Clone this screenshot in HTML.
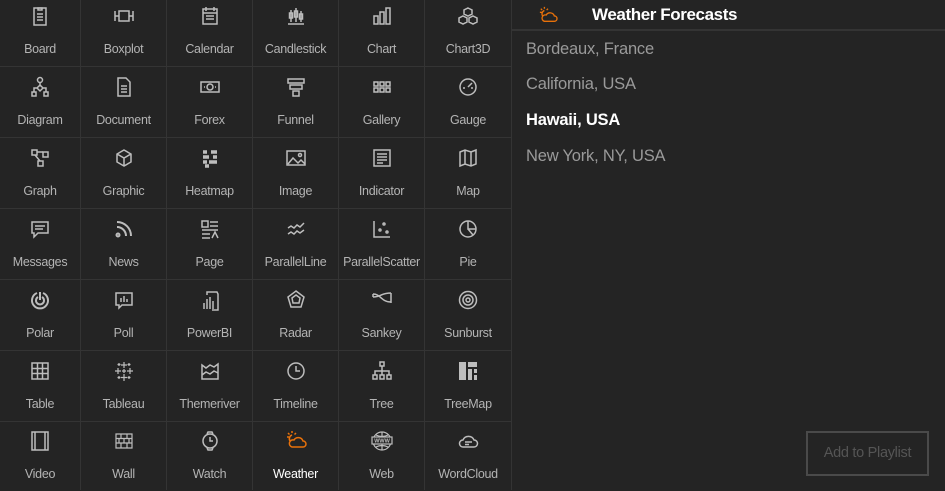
<!DOCTYPE html>
<html><head><meta charset="utf-8"><style>
*{margin:0;padding:0;box-sizing:border-box}
body{width:945px;height:490px;background:#242424;font-family:"Liberation Sans",sans-serif;overflow:hidden;position:relative}
.grid{position:absolute;left:0;top:0;width:512px;height:490px;background:#343434;display:grid;
grid-template-columns:80px 85px 85px 85px 85px 86px;grid-template-rows:66px 70px 70px 70px 70px 70px 69px;gap:1px;border-right:1px solid #343434}
.c{background:#242424;position:relative;color:#b4b4b4;font-size:12.5px;text-align:center}
.c svg{position:absolute;left:50%;bottom:39px;margin-left:-11px;width:22px;height:22px;fill:none;stroke:#bdbdbd;stroke-width:1.5}
.c span{position:absolute;left:0;right:0;bottom:10px;white-space:nowrap;letter-spacing:-0.3px}
.c.on{color:#fff}
.c.on svg{stroke:#e8710a}
.hdr{position:absolute;left:512px;top:0;width:433px;height:31px;border-bottom:2px solid #343434}
.hdr span{position:absolute;left:80px;top:5px;color:#fff;font-size:17px;font-weight:bold;letter-spacing:-0.4px}
.hdr svg{position:absolute;left:26px;top:6px;width:20px;height:18px;fill:none;stroke:#e8710a;stroke-width:1.5}
.it{position:absolute;left:526px;font-size:16.5px;color:#9a9a9a;letter-spacing:-0.2px}
.btn{position:absolute;left:806px;top:431px;width:123px;height:45px;border:2px solid #4a4a4a;color:#555;font-size:14.5px;text-align:center;line-height:41px;letter-spacing:-0.3px}
</style></head><body>
<div class="grid">
<div class="c"><svg viewBox="0 0 22 22"><rect x="5" y="3" width="12" height="17"/><path d="M9 3h4v2H9zM8 9h6M8 12h6M8 15h6"/></svg><span>Board</span></div>
<div class="c"><svg viewBox="0 0 22 22"><path d="M2 6v10M20 6v10M2 11h4M16 11h4"/><rect x="6" y="6" width="10" height="10"/></svg><span>Boxplot</span></div>
<div class="c"><svg viewBox="0 0 22 22"><rect x="4" y="4" width="14" height="15"/><path d="M4 8h14M7 2v4M15 2v4M7 11h8M7 14h8"/></svg><span>Calendar</span></div>
<div class="c"><svg viewBox="0 0 22 22"><path d="M3 19h16M6 5v12M11 3v14M16 6v11"/><rect x="4.5" y="8" width="3" height="5"/><rect x="9.5" y="6" width="3" height="6"/><rect x="14.5" y="9" width="3" height="5"/></svg><span>Candlestick</span></div>
<div class="c"><svg viewBox="0 0 22 22"><rect x="3" y="11" width="4" height="8"/><rect x="9" y="7" width="4" height="12"/><rect x="15" y="3" width="4" height="16"/></svg><span>Chart</span></div>
<div class="c"><svg viewBox="0 0 22 22"><path d="M11 3l4 2v4l-4 2-4-2V5zM6 11l4 2v4l-4 2-4-2v-4zM16 11l4 2v4l-4 2-4-2v-4z"/></svg><span>Chart3D</span></div>

<div class="c"><svg viewBox="0 0 22 22"><circle cx="11" cy="4" r="2.5"/><path d="M11 6.5v3M11 9l3 3-3 3-3-3zM8 12H5v4M14 12h3v4"/><rect x="3" y="16" width="4" height="4"/><rect x="15" y="16" width="4" height="4"/></svg><span>Diagram</span></div>
<div class="c"><svg viewBox="0 0 22 22"><path d="M5 2h8l4 4v14H5zM8 10h6M8 13h6M8 16h6"/></svg><span>Document</span></div>
<div class="c"><svg viewBox="0 0 22 22"><rect x="2" y="6" width="18" height="10"/><circle cx="11" cy="11" r="3"/><path d="M5 11h1M16 11h1"/></svg><span>Forex</span></div>
<div class="c"><svg viewBox="0 0 22 22"><path d="M3 3h16v4H3zM5 9h12v4H5zM8 15h6v5H8z"/></svg><span>Funnel</span></div>
<div class="c"><svg viewBox="0 0 22 22"><path d="M3 6h4v4H3zM9 6h4v4H9zM15 6h4v4h-4zM3 12h4v4H3zM9 12h4v4H9zM15 12h4v4h-4z"/></svg><span>Gallery</span></div>
<div class="c"><svg viewBox="0 0 22 22"><circle cx="11" cy="11" r="8"/><path d="M11 11l4-4M6 12h2M14 12h2"/></svg><span>Gauge</span></div>

<div class="c"><svg viewBox="0 0 22 22"><rect x="3" y="3" width="5" height="5"/><rect x="14" y="5" width="5" height="5"/><rect x="9" y="14" width="5" height="5"/><path d="M8 5h6M6 8l5 6"/></svg><span>Graph</span></div>
<div class="c"><svg viewBox="0 0 22 22"><path d="M11 3l7 4v8l-7 4-7-4V7zM4 7l7 4 7-4M11 11v8"/></svg><span>Graphic</span></div>
<div class="c"><svg viewBox="0 0 22 22" style="stroke-width:3.5"><path d="M4 5h4M12 5h6M4 10h6M14 10h4M4 15h4M10 15h8M6 19h4"/></svg><span>Heatmap</span></div>
<div class="c"><svg viewBox="0 0 22 22"><rect x="2" y="4" width="18" height="14"/><path d="M3 17l5-6 5 5 3-3 4 4"/><circle cx="15" cy="8" r="1.5"/></svg><span>Image</span></div>
<div class="c"><svg viewBox="0 0 22 22"><rect x="3" y="3" width="16" height="16"/><path d="M6 7h10M6 10h10M6 13h10M6 16h6"/></svg><span>Indicator</span></div>
<div class="c"><svg viewBox="0 0 22 22"><path d="M3 5l5-2 6 2 5-2v14l-5 2-6-2-5 2zM8 3v14M14 5v14"/></svg><span>Map</span></div>

<div class="c"><svg viewBox="0 0 22 22"><path d="M3 4h16v11H9l-4 4v-4H3zM6 8h10M6 11h8"/></svg><span>Messages</span></div>
<div class="c"><svg viewBox="0 0 22 22" style="stroke-width:2"><path d="M4 4a14 14 0 0 1 14 14M4 9a9 9 0 0 1 9 9"/><circle cx="5" cy="17" r="1.5"/></svg><span>News</span></div>
<div class="c"><svg viewBox="0 0 22 22"><path d="M3 3h6v6H3zM11 4h8M11 8h8M3 12h16M3 16h8M3 20h8M13 20l3-6 3 6"/></svg><span>Page</span></div>
<div class="c"><svg viewBox="0 0 22 22"><path d="M3 10l3-2 3 2 3-3 3 2 4-4M3 16l3-2 3 2 3-3 3 2 4-3"/></svg><span>ParallelLine</span></div>
<div class="c"><svg viewBox="0 0 22 22"><path d="M3 3v16h16"/><circle cx="13" cy="6" r="1"/><circle cx="9" cy="12" r="1"/><circle cx="16" cy="14" r="1"/></svg><span>ParallelScatter</span></div>
<div class="c"><svg viewBox="0 0 22 22"><circle cx="11" cy="11" r="8"/><path d="M11 3v8h8M11 11l5 6"/></svg><span>Pie</span></div>

<div class="c"><svg viewBox="0 0 22 22" style="stroke-width:2"><path d="M8 4a8 8 0 1 0 6 0M9 8a4 4 0 1 0 4 0M11 3v8"/></svg><span>Polar</span></div>
<div class="c"><svg viewBox="0 0 22 22"><path d="M3 4h16v12H9l-3 3v-3H3zM8 13V9M11 13V7M14 13v-3"/></svg><span>Poll</span></div>
<div class="c"><svg viewBox="0 0 22 22"><path d="M8 6V3h10l1 2v16h-6M5 20v-6M8 20V10M11 20V8M14 20v-8"/></svg><span>PowerBI</span></div>
<div class="c"><svg viewBox="0 0 22 22"><path d="M11 2l8 6-3 10H6L3 8zM11 6l4 3-1 5H8L7 9z"/></svg><span>Radar</span></div>
<div class="c"><svg viewBox="0 0 22 22"><path d="M2 5c8 0 8 8 18 8M2 8c8 0 8-4 18-4M2 5v3M20 4v10"/></svg><span>Sankey</span></div>
<div class="c"><svg viewBox="0 0 22 22"><circle cx="11" cy="11" r="8.5"/><circle cx="11" cy="11" r="5"/><circle cx="11" cy="11" r="2"/></svg><span>Sunburst</span></div>

<div class="c"><svg viewBox="0 0 22 22"><rect x="3" y="3" width="16" height="16"/><path d="M3 8.5h16M3 13.5h16M8.5 3v16M13.5 3v16"/></svg><span>Table</span></div>
<div class="c"><svg viewBox="0 0 22 22" style="stroke-width:1.2"><path d="M11 2v6M8 5h6M11 14v7M8 17.5h6M5 8v6M2 11h6M17 8v6M14 11h6M9 11h4M11 9v4M6 3v3M4.5 4.5h3M16 3v3M14.5 4.5h3M6 16v3M4.5 17.5h3M16 16v3M14.5 17.5h3"/></svg><span>Tableau</span></div>
<div class="c"><svg viewBox="0 0 22 22"><path d="M3 5v14h16V4l-4 3-4-2-4 3zM3 15l4-3 4 2 4-3 4 2"/></svg><span>Themeriver</span></div>
<div class="c"><svg viewBox="0 0 22 22"><circle cx="11" cy="11" r="8"/><path d="M11 6v5h4"/></svg><span>Timeline</span></div>
<div class="c"><svg viewBox="0 0 22 22"><rect x="9" y="2" width="4" height="4"/><rect x="2" y="15" width="4" height="4"/><rect x="9" y="15" width="4" height="4"/><rect x="16" y="15" width="4" height="4"/><path d="M11 6v9M4 15v-4h14v4"/></svg><span>Tree</span></div>
<div class="c"><svg viewBox="0 0 22 22" style="fill:#bdbdbd;stroke:none"><path d="M2 2h7v18H2zM11 2h9v5h-9zM11 9h4v11h-4zM17 9h3v4h-3zM17 15h3v5h-3z"/></svg><span>TreeMap</span></div>

<div class="c"><svg viewBox="0 0 22 22"><rect x="3" y="2" width="16" height="18"/><path d="M6 2v18M16 2v18"/></svg><span>Video</span></div>
<div class="c"><svg viewBox="0 0 22 22" style="stroke-width:1.2"><path d="M3 4h16v14H3zM3 8.5h16M3 13h16M8 4v4.5M14 4v4.5M11 8.5V13M6 8.5V13M16 8.5V13M8 13v5M14 13v5"/></svg><span>Wall</span></div>
<div class="c"><svg viewBox="0 0 22 22"><circle cx="11" cy="11" r="7"/><path d="M11 7v4h3M8 4l1-2h4l1 2M8 18l1 2h4l1-2"/></svg><span>Watch</span></div>
<div class="c on"><svg viewBox="0 0 22 22"><path d="M7 5a4 4 0 0 0-2 6M7 1v2M2 7h2M3 3l1.5 1.5M11 3l-1.5 1.5M7 17h11a3 3 0 0 0 0-6 5 5 0 0 0-9-1 3.5 3.5 0 0 0-2 7z"/></svg><span>Weather</span></div>
<div class="c"><svg viewBox="0 0 22 22" style="stroke-width:1.2"><circle cx="11" cy="11" r="9"/><path d="M11 2v18M2 11h18M5 5q6 3 12 0M5 17q6-3 12 0"/><rect x="1" y="7" width="20" height="7" fill="#242424"/><text x="11" y="12.7" font-size="5.5" text-anchor="middle" fill="#bdbdbd" stroke="none" font-weight="bold" font-family="Liberation Sans">WWW</text></svg><span>Web</span></div>
<div class="c"><svg viewBox="0 0 22 22"><path d="M6 17h11a3.5 3.5 0 0 0 0-7 6 6 0 0 0-11 0 3.5 3.5 0 0 0 0 7zM8 12h7M8 14.5h4"/></svg><span>WordCloud</span></div>
</div>

<div class="hdr"><svg viewBox="0 0 22 20"><path d="M7 5a4 4 0 0 0-2 6M7 1v2M2 7h2M3 3l1.5 1.5M11 3l-1.5 1.5M7 17h11a3 3 0 0 0 0-6 5 5 0 0 0-9-1 3.5 3.5 0 0 0-2 7z"/></svg><span>Weather Forecasts</span></div>
<div class="it" style="top:40px">Bordeaux, France</div>
<div class="it" style="top:75px">California, USA</div>
<div class="it" style="top:111px;color:#fff;font-weight:bold">Hawaii, USA</div>
<div class="it" style="top:147px">New York, NY, USA</div>
<div class="btn">Add to Playlist</div>
</body></html>
